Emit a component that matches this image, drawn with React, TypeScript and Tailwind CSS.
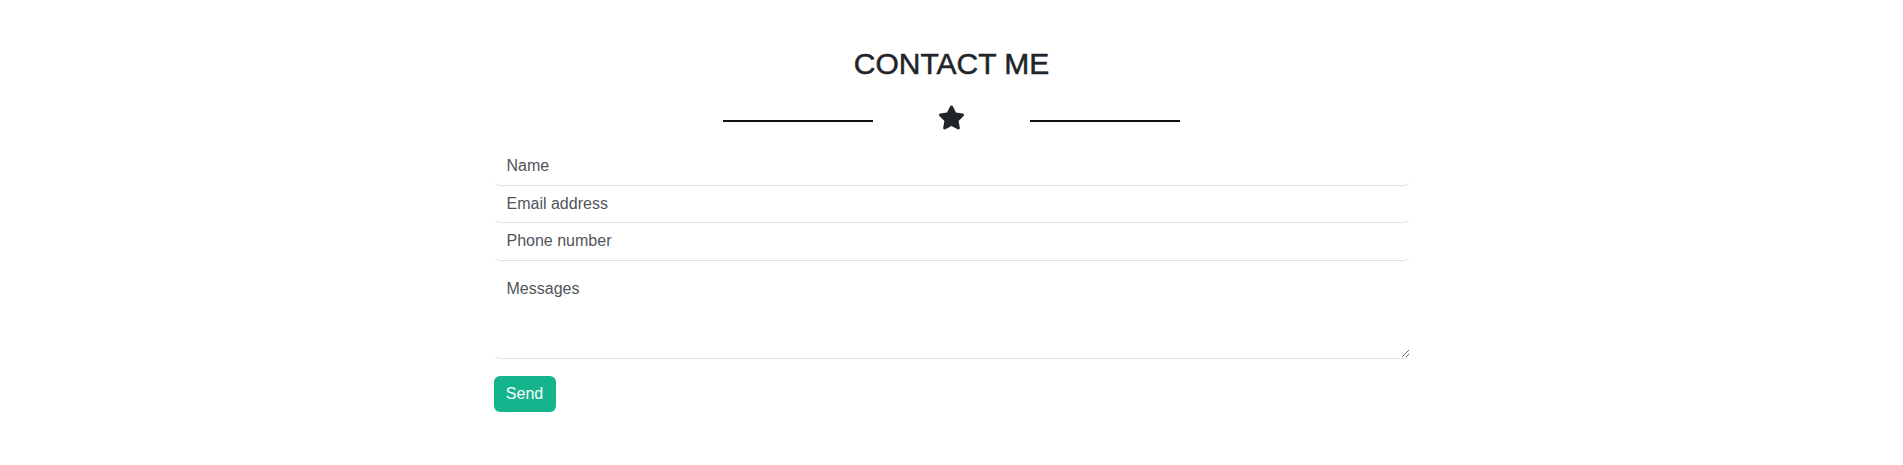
import { FaStar } from "react-icons/fa";

const FIELDS = ["Name", "Email address", "Phone number"];

export default function App() {
  return (
    <div className="min-h-[465px] bg-white pt-[46px] font-['Liberation_Sans',Arial,sans-serif] text-[#212529]">
      <h2 className="text-center text-[30px] leading-[36px] font-normal [-webkit-text-stroke:0.5px_#212529]">
        CONTACT ME
      </h2>

      {/* divider */}
      <div className="mt-[22px] flex h-[27px] items-center justify-center gap-[65px]">
        <span className="mt-[6px] h-[2px] w-[150px] bg-[#111]" />
        <FaStar size={27} className="text-[#212529]" />
        <span className="mt-[6px] h-[2px] w-[150px] bg-[#111]" />
      </div>

      <form className="mx-auto mt-[17px] flex w-[916px] flex-col" onSubmit={(e) => e.preventDefault()}>
        {FIELDS.map((f) => (
          <input
            key={f}
            type="text"
            placeholder={f}
            className="h-[37.5px] w-full rounded-md border-0 border-b border-[#dee2e6] bg-white px-[13px] text-[16px] leading-6 text-[#212529] outline-none placeholder:text-[#50555a]"
          />
        ))}
        <textarea
          placeholder="Messages"
          className="mt-[4px] h-[94px] w-full rounded-md border-0 border-b border-[#dee2e6] bg-white px-[13px] pt-[12px] text-[16px] leading-6 text-[#212529] outline-none placeholder:text-[#50555a]"
        />
        <div className="mt-[17px]">
          <button
            type="submit"
            className="h-[36px] w-[62px] rounded-md bg-[#14b48d] text-[16px] leading-6 text-white"
          >
            Send
          </button>
        </div>
      </form>
    </div>
  );
}
